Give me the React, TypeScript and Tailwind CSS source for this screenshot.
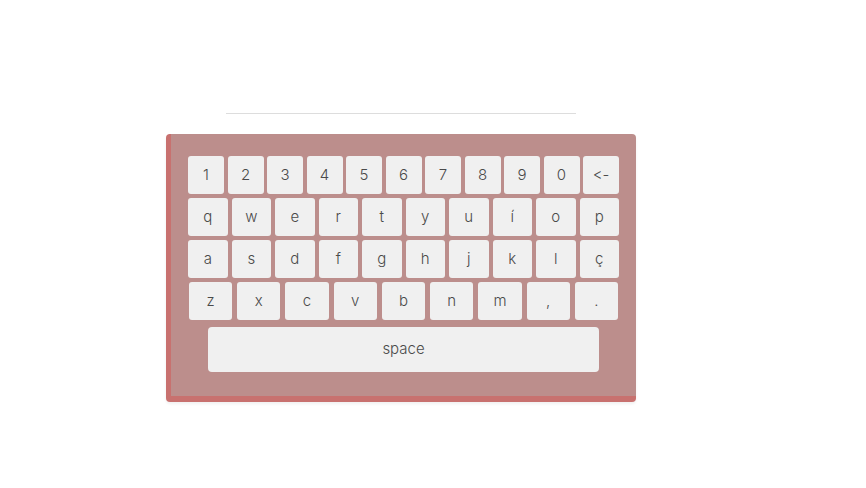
const rows: { keys: string[]; gap: string }[] = [
  { keys: ["1", "2", "3", "4", "5", "6", "7", "8", "9", "0", "<-"], gap: "gap-[3.5px]" },
  { keys: ["q", "w", "e", "r", "t", "y", "u", "í", "o", "p"], gap: "gap-[4px]" },
  { keys: ["a", "s", "d", "f", "g", "h", "j", "k", "l", "ç"], gap: "gap-[4px]" },
  { keys: ["z", "x", "c", "v", "b", "n", "m", ",", "."], gap: "gap-[5px] px-[1px]" },
];

const Key = ({ label }: { label: string }) => (
  <button className="flex-1 h-[37.5px] rounded-[3px] bg-[#f0f0f0] text-[15px] font-light text-[#4a4a4a] flex items-center justify-center">
    {label}
  </button>
);

const App = () => {
  return (
    <div
      className="w-[866px] h-[488px] bg-white pt-[113px] pl-[166px] [font-feature-settings:'calt'_0,'liga'_0]"
      style={{ fontFamily: "Inter, 'Noto Sans', sans-serif" }}
    >
      {/* input line */}
      <div className="ml-[60px] w-[350px] h-px bg-[#dddddd]" />

      {/* keyboard */}
      <div className="mt-[20px] w-[470px] rounded-[4px] bg-[#bc8e8c] border-l-[5px] border-b-[6px] border-[#c8716f] pt-[22px] pb-[24px] px-[17px] shadow-[0_2px_3px_rgba(0,0,0,0.06)]">
        <div className="flex flex-col gap-[4.5px]">
          {rows.map((row, i) => (
            <div key={i} className={`flex ${row.gap}`}>
              {row.keys.map((k) => (
                <Key key={k} label={k} />
              ))}
            </div>
          ))}
        </div>
        <div className="mt-[7.5px] px-[20px]">
          <button className="w-full h-[44.5px] rounded-[4px] bg-[#f0f0f0] text-[15px] font-light text-[#4a4a4a] flex items-center justify-center">
            space
          </button>
        </div>
      </div>
    </div>
  );
};

export default App;
